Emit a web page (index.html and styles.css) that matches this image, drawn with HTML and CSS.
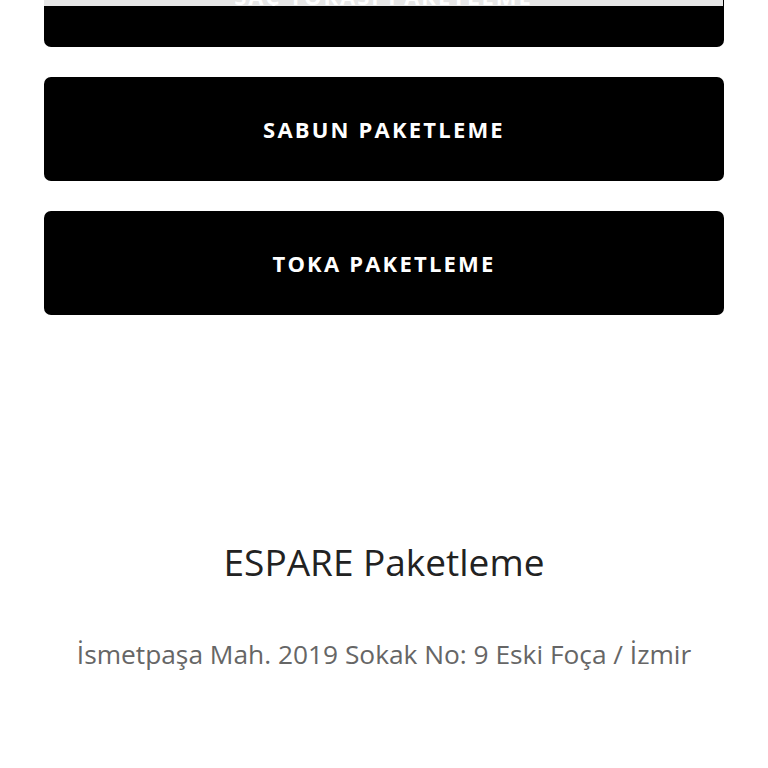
FILE: index.html
```html
<!DOCTYPE html>
<html lang="tr">
<head>
<meta charset="utf-8">
<link rel="stylesheet" href="styles.css">
</head>
<body>
<div class="top-strip"><span>SAÇ TOKASI PAKETLEME</span></div>
<main class="page">
  <div class="buttons">
    <a class="btn btn-cut" href="#"></a>
    <a class="btn" href="#">SABUN PAKETLEME</a>
    <a class="btn" href="#">TOKA PAKETLEME</a>
  </div>
  <footer class="footer">
    <h2 class="brand">ESPARE Paketleme</h2>
    <p class="address">İsmetpaşa Mah. 2019 Sokak No: 9 Eski Foça / İzmir</p>
  </footer>
</main>
</body>
</html>
```
FILE: styles.css
```css
html, body {
  margin: 0;
  padding: 0;
  background: #ffffff;
  font-family: "Open Sans", "Noto Sans", sans-serif;
}
body { overflow: hidden; height: 768px; position: relative; }
.top-strip {
  position: absolute;
  top: 0;
  left: 44px;
  width: 679px;
  height: 6px;
  background: #e6e6e6;
  overflow: hidden;
  text-align: center;
  z-index: 2;
}
.top-strip span {
  display: block;
  margin-top: -14px;
  color: #ffffff;
  font-weight: 700;
  font-size: 22px;
  letter-spacing: 2px;
  line-height: 20px;
}
.page {
  padding: 0 44px;
}
.buttons {
  display: flex;
  flex-direction: column;
  gap: 30px;
}
.btn {
  display: flex;
  align-items: center;
  justify-content: center;
  height: 104px;
  background: #000000;
  border-radius: 7px;
  color: #ffffff;
  text-decoration: none;
  font-weight: 700;
  font-size: 22px;
  letter-spacing: 2.2px;
}
.btn-cut {
  margin-top: -57px;
}
.footer {
  padding-top: 222px;
  text-align: center;
}
.brand {
  margin: 0;
  font-weight: 400;
  font-size: 37px;
  line-height: 50px;
  color: #222222;
}
.address {
  margin: 49px 0 0;
  font-size: 26.3px;
  line-height: 36px;
  color: #666666;
}
```
